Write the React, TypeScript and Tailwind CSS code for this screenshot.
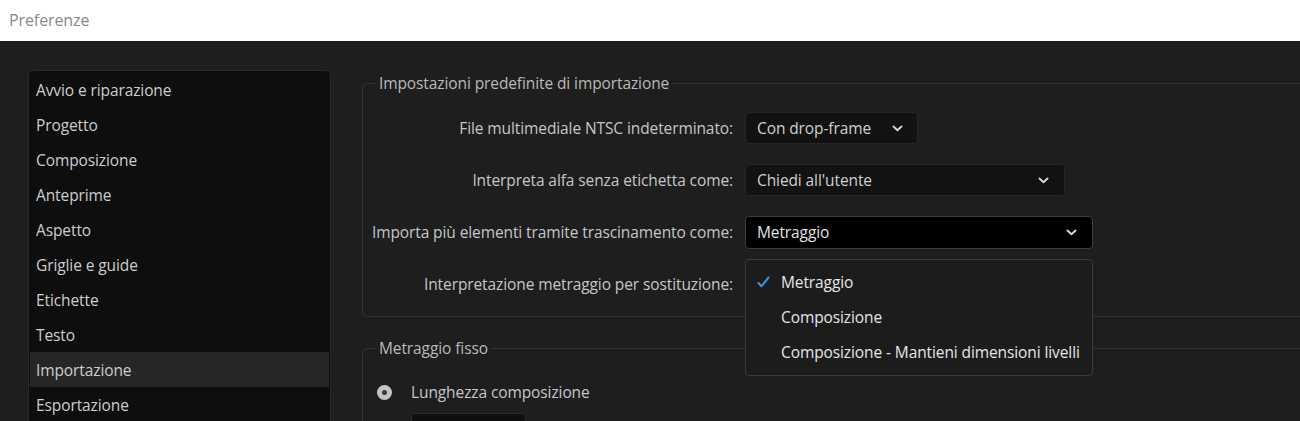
import React from "react";

const Chevron = () => (
  <svg width="11" height="7" viewBox="0 0 11 7" fill="none">
    <path d="M1.5 1.5L5.5 5.2L9.5 1.5" stroke="#d4d4d4" strokeWidth="2" strokeLinecap="round" strokeLinejoin="round" />
  </svg>
);

const Check = () => (
  <svg width="13" height="12" viewBox="0 0 13 12" fill="none">
    <path d="M1.5 7L4.5 10.2L11.5 1.5" stroke="#3f91ea" strokeWidth="2" strokeLinecap="round" strokeLinejoin="round" />
  </svg>
);

const sidebarItems = [
  "Avvio e riparazione",
  "Progetto",
  "Composizione",
  "Anteprime",
  "Aspetto",
  "Griglie e guide",
  "Etichette",
  "Testo",
  "Importazione",
  "Esportazione",
];

export default function App() {
  return (
    <div className="w-[1300px] h-[421px] overflow-hidden bg-[#1e1e1e] font-['Open_Sans',sans-serif] text-[15.5px] tracking-[-0.1px]">
      <div className="h-[41px] bg-white flex items-center pl-[9px] pb-[2px] text-[#8a8a8a] text-[16px]">Preferenze</div>
      <div className="flex pt-[29px]">
        <div className="ml-[28px] w-[303px] shrink-0 h-[420px] bg-[#0e0e0e] border border-[#2a2a2a] rounded-[5px] p-[1px]">
          {sidebarItems.map((it) => (
            <div
              key={it}
              className={
                "h-[35px] flex items-center px-[6px] pt-[2px] text-[#cdcdcd] " +
                (it === "Importazione" ? "bg-[#262626]" : "")
              }
            >
              {it}
            </div>
          ))}
        </div>
        <div className="ml-[31px] w-[1000px] shrink-0 mt-[3px]">
          <fieldset className="border border-[#333333] rounded-[5px]">
            <legend className="ml-[12px] px-[4px] leading-[20px] text-[#b9b9b9]">Impostazioni predefinite di importazione</legend>
            <div className="pt-[19px] pb-[16px] flex flex-col gap-[20px]">
              <div className="flex items-center h-[32px]">
                <div className="w-[370px] pt-[2px] text-right text-[#c6c6c6]">File multimediale NTSC indeterminato:</div>
                <div className="ml-[12px] w-[173px] h-[32px] bg-[#121212] border border-[#262626] rounded-[4px] flex items-center justify-between pl-[11px] pr-[14px] text-[#cfcfcf]">
                  <span className="pt-[1px]">Con drop-frame</span>
                  <Chevron />
                </div>
              </div>
              <div className="flex items-center h-[32px]">
                <div className="w-[370px] pt-[2px] text-right text-[#c6c6c6]">Interpreta alfa senza etichetta come:</div>
                <div className="ml-[12px] w-[320px] h-[32px] bg-[#121212] border border-[#262626] rounded-[4px] flex items-center justify-between pl-[11px] pr-[15px] text-[#cfcfcf]">
                  <span className="pt-[1px]">Chiedi all'utente</span>
                  <Chevron />
                </div>
              </div>
              <div className="flex items-center h-[32px]">
                <div className="w-[370px] pt-[2px] text-right text-[#c6c6c6] whitespace-nowrap">Importa più elementi tramite trascinamento come:</div>
                <div className="relative ml-[12px] w-[348px] h-[33px] bg-black border border-[#3c3c3c] rounded-[4px] flex items-center justify-between pl-[11px] pr-[15px] text-[#e2e2e2]">
                  <span className="pt-[1px]">Metraggio</span>
                  <Chevron />
                  <div className="absolute z-10 left-[-1px] top-[42px] w-[348px] bg-[#1c1c1c] border border-[#3a3a3a] rounded-[4px] py-[5px]">
                    <div className="h-[35px] flex items-center pl-[11px] text-[#e6e6e6]">
                      <Check />
                      <span className="ml-[11px] pt-[2px]">Metraggio</span>
                    </div>
                    <div className="h-[35px] flex items-center pl-[35px] pt-[2px] text-[#e6e6e6]">Composizione</div>
                    <div className="h-[35px] flex items-center pl-[35px] pt-[2px] text-[#e6e6e6] whitespace-nowrap">Composizione - Mantieni dimensioni livelli</div>
                  </div>
                </div>
              </div>
              <div className="flex items-center h-[32px]">
                <div className="w-[370px] pt-[2px] text-right text-[#c6c6c6]">Interpretazione metraggio per sostituzione:</div>
                <div className="ml-[12px] w-[348px] h-[32px] bg-[#121212] rounded-[4px]"></div>
              </div>
            </div>
          </fieldset>
          <fieldset className="mt-[21px] border border-[#333333] rounded-[5px]">
            <legend className="ml-[12px] px-[4px] leading-[20px] text-[#b9b9b9]">Metraggio fisso</legend>
            <div className="pt-[24px] pl-[14px] pb-[20px]">
              <div className="flex items-center h-[20px]">
                <div className="w-[15px] h-[15px] rounded-full border-[5px] border-[#c4c4c4] bg-[#3a3a3a]"></div>
                <span className="ml-[19px] pt-[2px] text-[#c6c6c6]">Lunghezza composizione</span>
              </div>
              <div className="flex items-center h-[30px] mt-[11px]">
                <div className="w-[15px] h-[15px] rounded-full border-[2px] border-[#c4c4c4]"></div>
                <div className="ml-[19px] w-[115px] h-[30px] bg-[#0f0f0f] border border-[#2a2a2a] rounded-[4px] flex items-center pl-[10px] text-[#a0a0a0]">0:00:10:00</div>
                <span className="ml-[10px] text-[#9a9a9a]">Base timecode 30</span>
              </div>
            </div>
          </fieldset>
        </div>
      </div>
    </div>
  );
}
